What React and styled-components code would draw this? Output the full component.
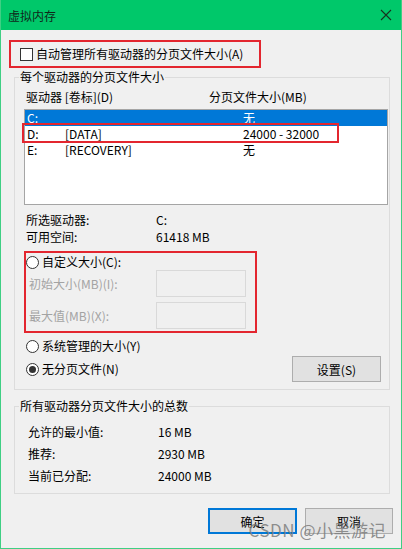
import React from 'react'
import styled, { createGlobalStyle } from 'styled-components'

const GlobalStyle = createGlobalStyle`
    html, body {
        margin: 0;
        padding: 0;
        background: #f0f0f0;
    }
    * {
        box-sizing: border-box;
    }
`

const drives = [
    { letter: 'C:', label: '', size: '无', selected: true },
    { letter: 'D:', label: '[DATA]', size: '24000 - 32000', marked: true },
    { letter: 'E:', label: '[RECOVERY]', size: '无' },
]

const totals = [
    { name: '允许的最小值:', value: '16 MB' },
    { name: '推荐:', value: '2930 MB' },
    { name: '当前已分配:', value: '24000 MB' },
]

function App() {
    return (
        <Window>
            <GlobalStyle />
            <TitleBar>
                <Title>虚拟内存</Title>
                <CloseButton>
                    <svg width="12" height="12" viewBox="0 0 12 12">
                        <path d="M1 1 L11 11 M11 1 L1 11" stroke="#17321f" strokeWidth="1.1" fill="none" />
                    </svg>
                </CloseButton>
            </TitleBar>
            <Body>
                <Mark1>
                    <CheckBox />
                    <Text>自动管理所有驱动器的分页文件大小(A)</Text>
                </Mark1>

                <Group>
                    <Legend>每个驱动器的分页文件大小</Legend>
                    <HeaderRow>
                        <HeadCell>驱动器 [卷标](D)</HeadCell>
                        <HeadCell>分页文件大小(MB)</HeadCell>
                    </HeaderRow>
                    <ListBox>
                        {drives.map((d) => (
                            <DriveRow key={d.letter} selected={d.selected}>
                                <LetterCell>{d.letter}</LetterCell>
                                <LabelCell>{d.label}</LabelCell>
                                <span>{d.size}</span>
                            </DriveRow>
                        ))}
                        <Mark2 />
                    </ListBox>

                    <InfoList>
                        <InfoRow>
                            <InfoName>所选驱动器:</InfoName>
                            <span>C:</span>
                        </InfoRow>
                        <InfoRow>
                            <InfoName>可用空间:</InfoName>
                            <span>61418 MB</span>
                        </InfoRow>
                    </InfoList>

                    <Mark3>
                        <RadioRow>
                            <Radio />
                            <Text>自定义大小(C):</Text>
                        </RadioRow>
                        <SizeRow>
                            <DisabledLabel>初始大小(MB)(I):</DisabledLabel>
                            <SizeInput />
                        </SizeRow>
                        <SizeRow second>
                            <DisabledLabel>最大值(MB)(X):</DisabledLabel>
                            <SizeInput />
                        </SizeRow>
                    </Mark3>

                    <RadioRow system>
                        <Radio />
                        <Text>系统管理的大小(Y)</Text>
                    </RadioRow>
                    <LastRow>
                        <RadioRow>
                            <Radio checked />
                            <Text>无分页文件(N)</Text>
                        </RadioRow>
                        <Button width={89}>设置(S)</Button>
                    </LastRow>
                </Group>

                <TotalsGroup>
                    <Legend>所有驱动器分页文件大小的总数</Legend>
                    <TotalsList>
                        {totals.map((t) => (
                            <TotalRow key={t.name}>
                                <TotalName>{t.name}</TotalName>
                                <span>{t.value}</span>
                            </TotalRow>
                        ))}
                    </TotalsList>
                </TotalsGroup>

                <Footer>
                    <Button width={89} primary>确定</Button>
                    <Button width={88}>取消</Button>
                </Footer>

                <Watermark>CSDN @小黑游记</Watermark>
            </Body>
        </Window>
    )
}

const Window = styled.div`
    width: 402px;
    height: 549px;
    display: flex;
    flex-direction: column;
    border: 1px solid #3fcf84;
    border-top: 0;
    font-family: "Noto Sans CJK SC", "Noto Sans", sans-serif;
    font-size: 12px;
    color: #000;
    overflow: hidden;
`

const TitleBar = styled.div`
    height: 30px;
    flex-shrink: 0;
    background: #00c86a;
    display: flex;
    align-items: center;
    justify-content: space-between;
    padding: 0 9px 0 7px;
`

const Title = styled.div`
    font-size: 12px;
    color: #10281a;
`

const CloseButton = styled.div`
    display: flex;
    align-items: center;
`

const Body = styled.div`
    flex: 1;
    position: relative;
    background: #f0f0f0;
    padding-top: 10px;
`

const Text = styled.span`
    line-height: 16px;
    white-space: nowrap;
`

const Mark1 = styled.div`
    margin-left: 8px;
    width: 252px;
    height: 28px;
    border: 2px solid #e3262f;
    display: flex;
    align-items: center;
    padding-left: 9px;
    gap: 3px;
`

const CheckBox = styled.span`
    width: 13px;
    height: 13px;
    border: 1px solid #333;
    background: #fff;
`

const Group = styled.fieldset`
    margin: 1px 0 0 13px;
    width: 376px;
    border: 1px solid #dcdcdc;
    padding: 0 0 7px 0;
    min-width: 0;
`

const TotalsGroup = styled(Group)`
    margin-top: 8px;
    padding-bottom: 6px;
`

const Legend = styled.legend`
    margin-left: 4px;
    padding: 0 1px;
    line-height: 16px;
    color: #000;
`

const HeaderRow = styled.div`
    margin-top: 4px;
    padding-left: 11px;
    display: grid;
    grid-template-columns: 183px 1fr;
    line-height: 16px;
`

const HeadCell = styled.span`
    white-space: nowrap;
`

const ListBox = styled.div`
    position: relative;
    margin: 4px 0 0 9px;
    width: 364px;
    height: 96px;
    border: 1px solid #a5a5a5;
    background: #fff;
`

const DriveRow = styled.div`
    display: grid;
    grid-template-columns: 38px 178px 1fr;
    height: 16px;
    line-height: 16px;
    padding-left: 2px;
    background: ${(props) => (props.selected ? '#0078d7' : 'transparent')};
    color: ${(props) => (props.selected ? '#fff' : '#000')};
`

const LetterCell = styled.span``
const LabelCell = styled.span``

const Mark2 = styled.div`
    position: absolute;
    left: -3px;
    top: 13px;
    width: 317px;
    height: 20px;
    border: 2px solid #e3262f;
    pointer-events: none;
`

const InfoList = styled.div`
    margin-top: 7px;
    padding-left: 11px;
    display: flex;
    flex-direction: column;
    gap: 1px;
`

const InfoRow = styled.div`
    display: grid;
    grid-template-columns: 130px 1fr;
    line-height: 16px;
`

const InfoName = styled.span``

const Mark3 = styled.div`
    margin: 6px 0 0 9px;
    width: 233px;
    height: 82px;
    border: 2px solid #e3262f;
    padding-top: 1px;
`

const RadioRow = styled.div`
    display: flex;
    align-items: center;
    gap: 3px;
    height: 16px;
    margin: ${(props) => (props.system ? '5px 0 0 11px' : '0')};
`

const Radio = styled.span`
    width: 13px;
    height: 13px;
    border-radius: 50%;
    border: 1px solid #333;
    background: #fff;
    position: relative;
    flex-shrink: 0;
    &::after {
        content: '';
        display: ${(props) => (props.checked ? 'block' : 'none')};
        position: absolute;
        left: 2px;
        top: 2px;
        width: 7px;
        height: 7px;
        border-radius: 50%;
        background: #333;
    }
`

const SizeRow = styled.div`
    display: grid;
    grid-template-columns: 127px 90px;
    align-items: center;
    padding-left: 3px;
    margin-top: ${(props) => (props.second ? '5px' : '0')};
`

const DisabledLabel = styled.span`
    color: #a3a3a3;
    line-height: 16px;
    white-space: nowrap;
`

const SizeInput = styled.div`
    height: 27px;
    border: 1px solid #d9d9d9;
    background: #f0f0f0;
`

const LastRow = styled.div`
    margin: 2px 8px 0 11px;
    height: 26px;
    display: flex;
    align-items: center;
    justify-content: space-between;
`

const Button = styled.div`
    width: ${(props) => props.width}px;
    height: 26px;
    display: flex;
    align-items: center;
    justify-content: center;
    background: #e1e1e1;
    border: 1px solid ${(props) => (props.primary ? '#0078d7' : '#adadad')};
    box-shadow: ${(props) => (props.primary ? 'inset 0 0 0 1px #0078d7' : 'none')};
    color: #000;
`

const TotalsList = styled.div`
    padding: 7px 0 0 13px;
    display: flex;
    flex-direction: column;
`

const TotalRow = styled.div`
    display: grid;
    grid-template-columns: 130px 1fr;
    height: 22px;
    line-height: 22px;
`

const TotalName = styled.span``

const Footer = styled.div`
    margin: 14px 8px 0 0;
    display: flex;
    justify-content: flex-end;
    gap: 8px;
`

const Watermark = styled.div`
    position: absolute;
    right: 15px;
    bottom: 6px;
    font-size: 17px;
    color: rgba(125, 125, 125, 0.85);
    letter-spacing: 0.5px;
    white-space: nowrap;
    pointer-events: none;
`

export default App
